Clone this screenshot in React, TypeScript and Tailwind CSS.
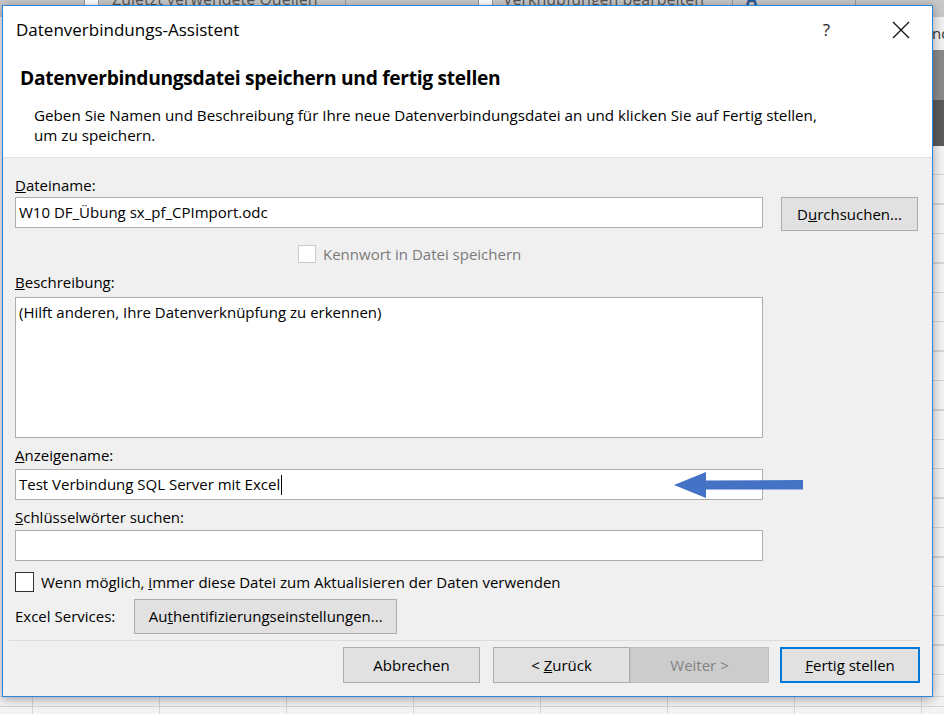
import React from "react";

const font = { fontFamily: '"Open Sans", "Noto Sans", sans-serif' };

function Field({ value, caret, className = "" }: { value?: string; caret?: boolean; className?: string }) {
  return (
    <div className={`h-[31px] w-[748px] border border-[#adadad] bg-white flex items-center pl-[3px] text-[15px] text-black ${className}`}>
      <span>{value}</span>
      {caret && <span className="ml-[1px] h-[20px] w-[1px] bg-black" />}
    </div>
  );
}

function Btn({ children, className = "", disabled = false }: { children: React.ReactNode; className?: string; disabled?: boolean }) {
  return (
    <div
      className={`flex items-center justify-center text-[15px] ${
        disabled ? "bg-[#cccccc] border border-[#bfbfbf] text-[#838383]" : "bg-[#e1e1e1] border border-[#adadad] text-black"
      } ${className}`}
    >
      <span className="whitespace-pre">{children}</span>
    </div>
  );
}

export default function App() {
  return (
    <div className="relative h-[714px] w-[944px] overflow-hidden bg-[#f3f3f3]" style={font}>
      {/* excel behind */}
      <div className="relative h-[17px] bg-[#c8c8c8] text-[16px] text-[#555] leading-none">
        <div className="absolute left-[84px] -top-[8px] w-[15px] h-[15px] border border-[#999] bg-white" />
        <span className="absolute left-[112px] -top-[9px]">Zuletzt verwendete Quellen</span>
        <div className="absolute left-[345px] top-0 h-[17px] w-[1px] bg-[#999]" />
        <div className="absolute left-[478px] -top-[8px] w-[15px] h-[15px] border border-[#999] bg-white" />
        <span className="absolute left-[503px] -top-[9px]">Verknüpfungen bearbeiten</span>
        <div className="absolute left-[732px] top-0 h-[17px] w-[1px] bg-[#999]" />
        <span className="absolute left-[746px] -top-[9px] font-bold text-[#2b5797]">A</span>
        <div className="absolute left-[855px] top-0 h-[17px] w-[1px] bg-[#999]" />
      </div>
      <div className="absolute right-0 top-[17px] w-[12px] h-[33px] bg-[#f0f0f0] text-[15px] text-[#333] leading-[33px] overflow-hidden">nd</div>
      <div className="absolute right-0 top-[50px] w-[12px] h-[50px] bg-[#8a8a8a]" />
      <div className="absolute right-0 top-[100px] w-[12px] h-[46px] bg-[#5a5a5a]" />
      <div className="absolute right-0 top-[146px] w-[12px] bottom-0 bg-[repeating-linear-gradient(to_bottom,#f3f3f3_0px,#f3f3f3_28px,#d4d4d4_28px,#d4d4d4_29.4px)]" />
      <div className="absolute left-0 right-0 bottom-0 h-[18px] bg-[repeating-linear-gradient(to_right,#f3f3f3_0px,#f3f3f3_32px,#d4d4d4_32px,#d4d4d4_33px,#f3f3f3_33px,#f3f3f3_127px)] border-t border-[#d8d8d8]">
        <div className="mt-[9px] h-[1px] bg-[#d4d4d4]" />
      </div>

      {/* dialog */}
      <div className="absolute left-[2px] top-[5px] w-[931px] h-[692px] border border-[#2b88d8] bg-[#f0f0f0] flex flex-col shadow-[0_2px_10px_rgba(0,0,0,0.35)]">
        <div className="bg-white border-b border-[#dfdfdf] h-[152px] flex flex-col">
          <div className="flex items-center h-[47px] pt-[1px]">
            <span className="ml-[13px] text-[17px] text-black">Datenverbindungs-Assistent</span>
            <span className="ml-auto mr-[62px] text-[17px] text-[#222]">?</span>
            <svg className="mr-[22px]" width="18" height="18" viewBox="0 0 18 18">
              <path d="M1 1 L17 17 M17 1 L1 17" stroke="#111" strokeWidth="1.3" />
            </svg>
          </div>
          <div className="ml-[17px] mt-[12px] h-[26px] leading-[26px] text-[19.2px] font-bold tracking-[-0.3px] text-black">
            Datenverbindungsdatei speichern und fertig stellen
          </div>
          <div className="ml-[31px] mt-[14px] text-[15.2px] leading-[20px] text-black">
            Geben Sie Namen und Beschreibung für Ihre neue Datenverbindungsdatei an und klicken Sie auf Fertig stellen,
            <br />
            um zu speichern.
          </div>
        </div>

        <div className="flex flex-col pl-[12px] text-[15px] text-black">
          <div className="mt-[16px] h-[23px]"><u>D</u>ateiname:</div>
          <div className="flex items-start">
            <Field value="W10 DF_Übung sx_pf_CPImport.odc" />
            <Btn className="ml-[18px] w-[137px] h-[34px]">D<u>u</u>rchsuchen...</Btn>
          </div>
          <div className="flex items-center ml-[283px] mt-[14px] h-[18px] text-[#7a7a7a]">
            <div className="w-[18px] h-[18px] border border-[#cccccc] bg-white" />
            <span className="ml-[7px]">Kennwort in Datei speichern</span>
          </div>
          <div className="mt-[8px] h-[26px]"><u>B</u>eschreibung:</div>
          <div className="h-[141px] w-[748px] border border-[#adadad] bg-white px-[3px] pt-[3px]">(Hilft anderen, Ihre Datenverknüpfung zu erkennen)</div>
          <div className="mt-[5px] h-[26px] leading-[24px]"><u>A</u>nzeigename:</div>
          <div className="relative">
            <Field value="Test Verbindung SQL Server mit Excel" caret />
            <svg className="absolute left-[659px] top-[2px]" width="132" height="28" viewBox="0 0 132 28">
              <path d="M0 14 L32 1 L32 9.5 L129 9 L129 18.5 L32 18.5 L32 27 Z" fill="#4472c4" />
            </svg>
          </div>
          <div className="mt-[6px] h-[24px] leading-[22px]"><u>S</u>chlüsselwörter suchen:</div>
          <Field />
          <div className="flex items-center mt-[11px] h-[20px]">
            <div className="w-[19px] h-[20px] border border-[#333] bg-white" />
            <span className="ml-[7px]">Wenn möglich, <u>i</u>mmer diese Datei zum Aktualisieren der Daten verwenden</span>
          </div>
          <div className="flex items-center mt-[7px]">
            <span>Excel Services:</span>
            <Btn className="ml-[19px] w-[263px] h-[35px]">Au<u>t</u>hentifizierungseinstellungen...</Btn>
          </div>
        </div>

        <div className="mx-[6px] mt-[6px] h-[1px] bg-[#dcdcdc] w-[910px]" />

        <div className="flex mt-[6px] pl-[340px]">
          <Btn className="w-[137px] h-[36px]">Abbrechen</Btn>
          <Btn className="ml-[13px] w-[137px] h-[36px]">{"< "}<u>Z</u>urück</Btn>
          <Btn disabled className="w-[139px] h-[36px]">Weiter &gt;</Btn>
          <Btn className="ml-[11px] w-[140px] h-[36px] !border-2 !border-[#0078d7]"><u>F</u>ertig stellen</Btn>
        </div>
      </div>
    </div>
  );
}
